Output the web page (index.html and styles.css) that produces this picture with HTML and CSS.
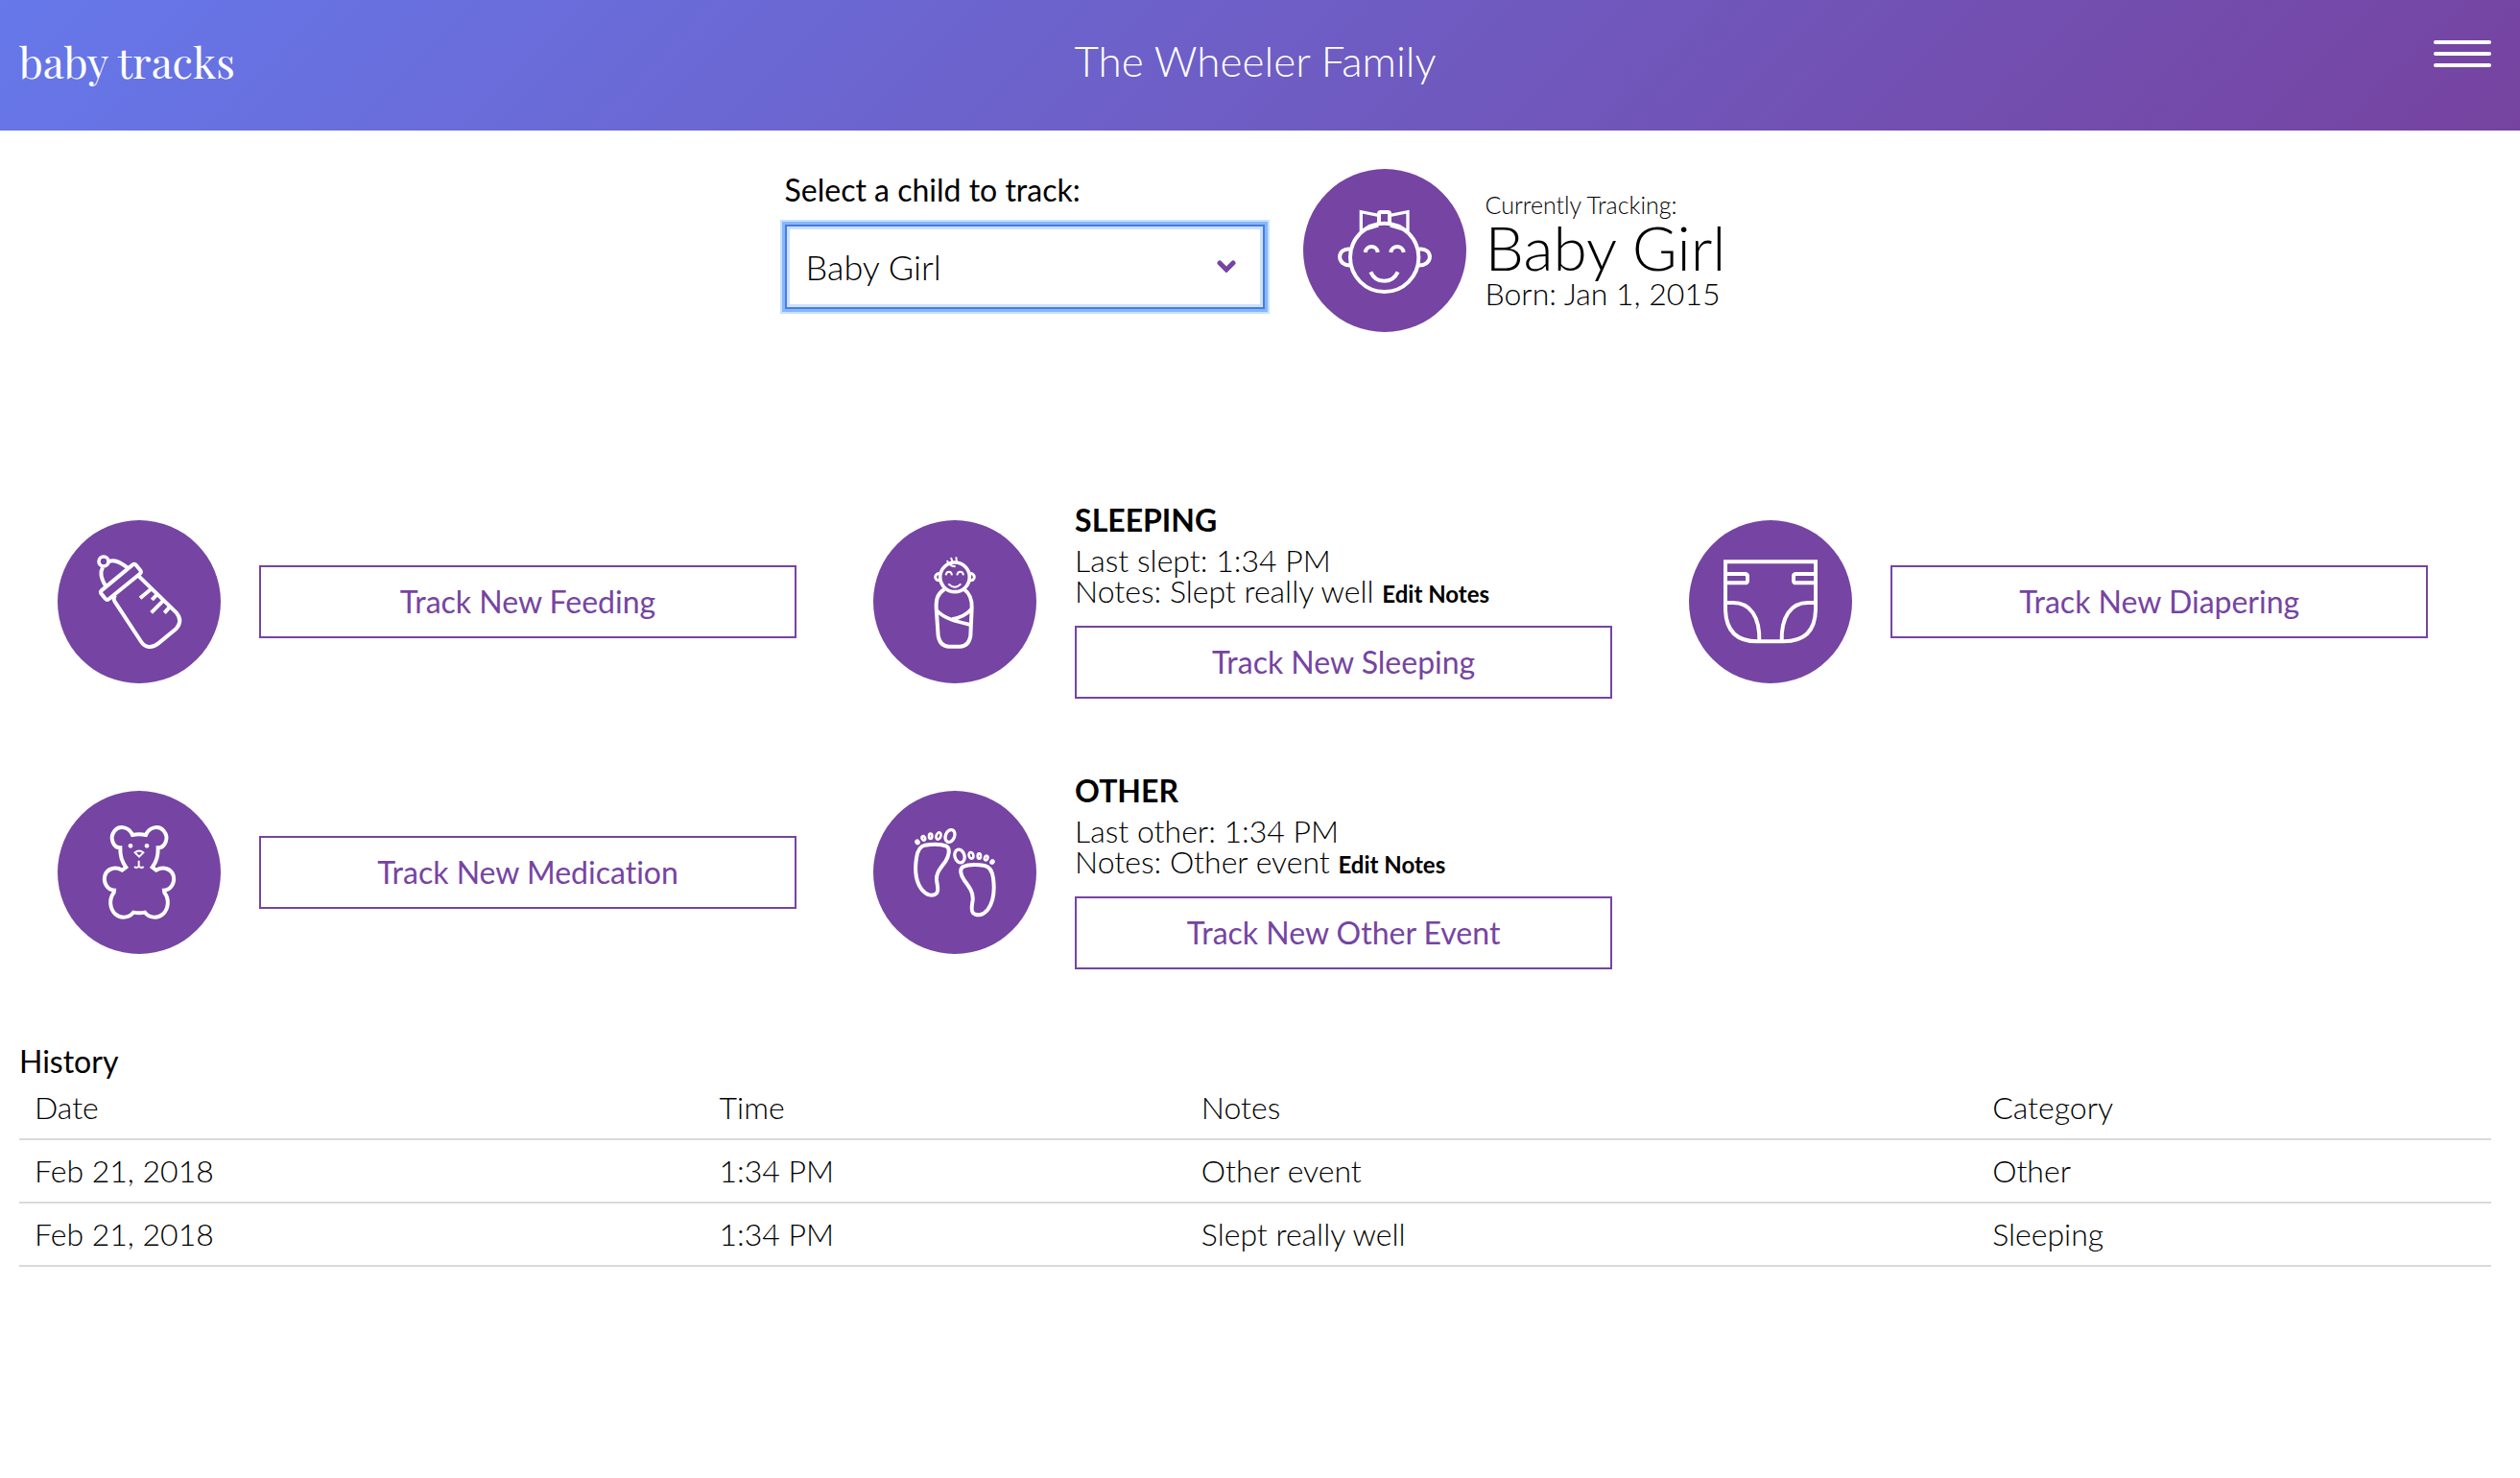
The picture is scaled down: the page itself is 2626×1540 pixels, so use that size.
FILE: index.html
```html
<!DOCTYPE html>
<html lang="en">
<head>
<meta charset="utf-8">
<title>baby tracks</title>
<link rel="stylesheet" href="styles.css">
</head>
<body>
<header class="site-header">
  <a class="logo" href="#">baby tracks</a>
  <h1 class="family">The Wheeler Family</h1>
  <button class="menu" type="button" aria-label="Menu"><span class="bar"></span><span class="bar"></span><span class="bar"></span></button>
</header>
<main class="page">
  <section class="child">
    <div class="picker">
      <label class="label" for="child">Select a child to track:</label>
      <div class="select-wrap">
        <select class="select" id="child"><option>Baby Girl</option></select>
        <svg class="chevron" viewBox="0 0 20 13" aria-hidden="true"><path d="M3 3l7 7 7-7"/></svg>
      </div>
    </div>
    <div class="current">
      <svg class="badge" viewBox="48 48 510 510" aria-hidden="true">
        <circle class="disc" cx="303" cy="303" r="255"/>
        <circle cx="302" cy="325" r="107"/>
        <path d="M196 299C152 292 149 354 200 349M409 299C455 292 457 354 405 349"/>
        <path d="M242 309C245 285 279 285 281 309M322 309C325 285 359 285 362 309M259 370C276 408 326 408 344 370"/>
        <path d="M229 245V182L283 193M229 241L283 225M375 245V182L320 193M375 241L320 225" stroke-width="10"/>
        <path d="M285 224V188Q285 183 290 183H313Q318 183 318 188V224"/>
      </svg>
      <div class="current-text">
        <p class="small">Currently Tracking:</p>
        <h2 class="name">Baby Girl</h2>
        <p>Born: Jan 1, 2015</p>
      </div>
    </div>
  </section>

  <section class="activities">
    <article class="activity">
      <svg class="badge" viewBox="30 36 510 510" aria-hidden="true">
        <circle class="disc" cx="285" cy="291" r="255"/>
        <circle cx="174" cy="165" r="15" stroke-width="11"/>
        <path d="M179 240C167 220 163 198 171 184M190 166C208 156 229 170 249 185"/>
        <path d="M167 256L264 176Q271 171 276 177L289 193Q293 199 287 204L191 282Q184 288 179 281L166 265Q163 260 167 256Z"/>
        <path d="M284 211L402 326Q422 350 401 375L345 421C324 438 303 434 292 417L208 289Q202 279 211 270"/>
        <path d="M325 249L288 280M341 268L325 285M361 287L323 325M380 308L364 326"/>
      </svg>
      <div class="detail"><button class="track" type="button">Track New Feeding</button></div>
    </article>
    <article class="activity">
      <svg class="badge" viewBox="30 36 510 510" aria-hidden="true">
        <circle class="disc" cx="285" cy="291" r="255"/>
        <circle cx="285" cy="214" r="46" stroke-width="11"/>
        <path d="M240 203C220 199 217 228 241 224M330 203C350 199 353 228 329 224" stroke-width="9"/>
        <path d="M257 208C259 194 274 194 276 208M292 208C294 194 310 194 312 208M265 235Q285 255 304 235M261 162Q265 179 287 181M273 153L279 170M289 151L291 168" stroke-width="6"/>
        <path d="M252 252C231 266 226 283 227 310L233 398Q239 431 267 431H301Q328 431 334 398L338 310C339 283 333 266 314 252"/>
        <path d="M228 318C255 347 300 355 335 363M338 313C321 332 301 343 276 345" stroke-width="11"/>
      </svg>
      <div class="detail">
        <h3 class="kind">SLEEPING</h3>
        <p>Last slept: 1:34 PM</p>
        <p class="notes">Notes: Slept really well <a class="edit" href="#">Edit Notes</a></p>
        <button class="track" type="button">Track New Sleeping</button>
      </div>
    </article>
    <article class="activity">
      <svg class="badge" viewBox="30 36 510 510" aria-hidden="true">
        <circle class="disc" cx="285" cy="291" r="255"/>
        <path d="M144 166H426V316Q424 415 326 415H244Q147 415 144 316Z"/>
        <path d="M144 204H205Q213 204 213 212V224Q213 232 205 232H144M426 204H365Q357 204 357 212V224Q357 232 365 232H426"/>
        <path d="M144 294H168C222 294 252 338 250 415M426 294H402C348 294 318 338 320 415"/>
      </svg>
      <div class="detail"><button class="track" type="button">Track New Diapering</button></div>
    </article>
    <article class="activity">
      <svg class="badge" viewBox="30 36 510 510" aria-hidden="true">
        <circle class="disc" cx="285" cy="291" r="255"/>
        <path stroke-linejoin="miter" d="M264 174Q285 169 306 174C316 149 346 142 362 161C380 183 366 214 344 214C345 238 339 258 326 275L338 284C361 271 386 280 392 301C398 324 384 345 363 347L364 354C380 375 377 404 360 421C342 437 317 433 303 416Q285 420 267 416C253 433 228 437 210 421C193 404 190 375 206 354L207 347C186 345 172 324 178 301C184 280 209 271 232 284L244 275C231 258 225 238 226 214C204 214 191 183 208 161C224 142 254 149 264 174Z"/>
        <circle class="dot" cx="258" cy="208" r="7"/><circle class="dot" cx="309" cy="208" r="7"/>
        <path d="M272 229Q285 218 298 229L285 242ZM284 254V275M270 273Q277 280 284 272Q292 280 299 273" stroke-width="6"/>
      </svg>
      <div class="detail"><button class="track" type="button">Track New Medication</button></div>
    </article>
    <article class="activity">
      <svg class="badge" viewBox="30 36 510 510" aria-hidden="true">
        <circle class="disc" cx="285" cy="291" r="255"/>
        <path d="M191 206C220 202 244 203 259 209C272 217 266 240 256 256C242 277 226 290 228 315C230 332 236 348 228 356C214 368 195 361 182 345C161 318 159 285 165 246C168 224 178 209 191 206Z"/>
        <path d="M379 270C350 265 326 266 311 273C298 281 304 300 314 315C329 336 343 351 341 377C339 395 334 410 342 418C356 430 375 423 388 407C408 381 410 348 405 309C402 287 392 273 379 270Z"/>
        <ellipse cx="270" cy="177" rx="14" ry="20" transform="rotate(22 270 177)" stroke-width="10"/>
        <ellipse cx="300" cy="240" rx="15" ry="21" transform="rotate(-18 300 240)" stroke-width="10"/>
        <g stroke-width="8">
          <ellipse cx="234" cy="177" rx="7" ry="11" transform="rotate(20 234 177)"/>
          <ellipse cx="209" cy="178" rx="5" ry="8"/>
          <ellipse cx="187" cy="184" rx="5" ry="7" transform="rotate(-20 187 184)"/>
          <ellipse cx="168" cy="196" rx="4" ry="5" transform="rotate(-30 168 196)"/>
          <ellipse cx="336" cy="238" rx="7" ry="10" transform="rotate(-15 336 238)"/>
          <ellipse cx="361" cy="240" rx="5" ry="8"/>
          <ellipse cx="383" cy="246" rx="5" ry="7" transform="rotate(20 383 246)"/>
          <ellipse cx="402" cy="258" rx="4" ry="5" transform="rotate(30 402 258)"/>
        </g>
      </svg>
      <div class="detail">
        <h3 class="kind">OTHER</h3>
        <p>Last other: 1:34 PM</p>
        <p class="notes">Notes: Other event <a class="edit" href="#">Edit Notes</a></p>
        <button class="track" type="button">Track New Other Event</button>
      </div>
    </article>
  </section>

  <section class="history">
    <h2 class="history-title" id="history">History</h2>
    <table class="table" aria-labelledby="history">
      <thead><tr><th class="col-date">Date</th><th class="col-time">Time</th><th class="col-notes">Notes</th><th>Category</th></tr></thead>
      <tbody>
        <tr><td>Feb 21, 2018</td><td>1:34 PM</td><td>Other event</td><td>Other</td></tr>
        <tr><td>Feb 21, 2018</td><td>1:34 PM</td><td>Slept really well</td><td>Sleeping</td></tr>
      </tbody>
    </table>
  </section>
</main>
</body>
</html>
```
FILE: styles.css
```css
:root {
  --purple: #7644a2;
}

* {
  box-sizing: border-box;
}

body {
  margin: 0;
  background: #fff;
  color: #000;
  font: 300 32px/32px Lato, sans-serif;
  font-variant-ligatures: none;
}

h1, h2, h3, p {
  margin: 0;
}

button, select {
  font: inherit;
  font-variant-ligatures: none;
  margin: 0;
}

.site-header {
  display: grid;
  grid-template-columns: 1fr auto 1fr;
  align-items: start;
  padding: 40px 30px 48px 20px;
  background: linear-gradient(135deg, #6678ea 0%, #7643a0 100%);
  color: #fff;
}

.logo {
  color: inherit;
  font: 400 44px/48px "Playfair Display", "Liberation Serif", serif;
  text-decoration: none;
}

.family {
  font-size: 44px;
  font-weight: 300;
  line-height: 46px;
}

.menu {
  display: flex;
  flex-direction: column;
  gap: 8px;
  justify-self: end;
  width: 60px;
  padding: 2px 0;
  border: 0;
  background: none;
}

.bar {
  width: 100%;
  height: 4px;
  border-radius: 2px;
  background: #fff;
}

.page {
  padding: 40px 30px 40px 20px;
}

.child {
  display: flex;
  justify-content: center;
  gap: 40px;
  margin-bottom: 140px;
}

.picker {
  width: 500px;
  padding-top: 6px;
}

.label {
  display: block;
  margin-bottom: 20px;
  font-weight: 400;
}

.select-wrap {
  position: relative;
}

.select {
  display: block;
  width: 100%;
  height: 88px;
  padding: 0 20px;
  appearance: none;
  border: 2px solid #4d7ade;
  border-radius: 0;
  outline: 0;
  background: #fff;
  box-shadow: 0 0 0 3px #84b8fb, 0 0 0 5px #c9e1ff, inset 0 0 0 3px #cbe2ff;
  color: #000;
  font-size: 36px;
  line-height: 44px;
}

.chevron {
  position: absolute;
  top: 37px;
  right: 30px;
  width: 20px;
  fill: none;
  stroke: var(--purple);
  stroke-width: 5;
  stroke-linecap: round;
  pointer-events: none;
}

.current {
  display: flex;
  align-items: center;
  gap: 20px;
}

.small {
  font-size: 25px;
  line-height: 25px;
}

.name {
  font-size: 64px;
  font-weight: 300;
  line-height: 64px;
}

.badge {
  flex: none;
  width: 170px;
  height: 170px;
  fill: none;
  stroke: #fff;
  stroke-width: 12;
}

.disc {
  fill: var(--purple);
  stroke: none;
}

.dot {
  fill: #fff;
  stroke: none;
}

.activities {
  display: flex;
  flex-wrap: wrap;
}

.activity {
  display: flex;
  align-items: center;
  gap: 40px;
  width: 33%;
  min-height: 282px;
  padding: 40px;
}

.detail {
  flex: 1;
}

.kind {
  margin-bottom: 10px;
  font-size: 32px;
  font-weight: 700;
}

.notes {
  margin-bottom: 20px;
}

.edit {
  color: #000;
  font-size: 24px;
  font-weight: 700;
  line-height: 24px;
  text-decoration: none;
}

.track {
  display: block;
  width: 100%;
  height: 76px;
  padding: 0 20px;
  border: 2px solid var(--purple);
  background: #fff;
  color: var(--purple);
  font-weight: 400;
}

.history {
  margin-top: 40px;
}

.history-title {
  font-size: 32px;
  font-weight: 400;
}

.table {
  width: 100%;
  table-layout: fixed;
  border-collapse: separate;
  border-spacing: 0;
}

.col-date {
  width: 27.7%;
}

.col-time {
  width: 19.5%;
}

.col-notes {
  width: 32%;
}

.table th,
.table td {
  padding: 16px;
  border-bottom: 2px solid #dadada;
  font-weight: 300;
  text-align: left;
}
```
